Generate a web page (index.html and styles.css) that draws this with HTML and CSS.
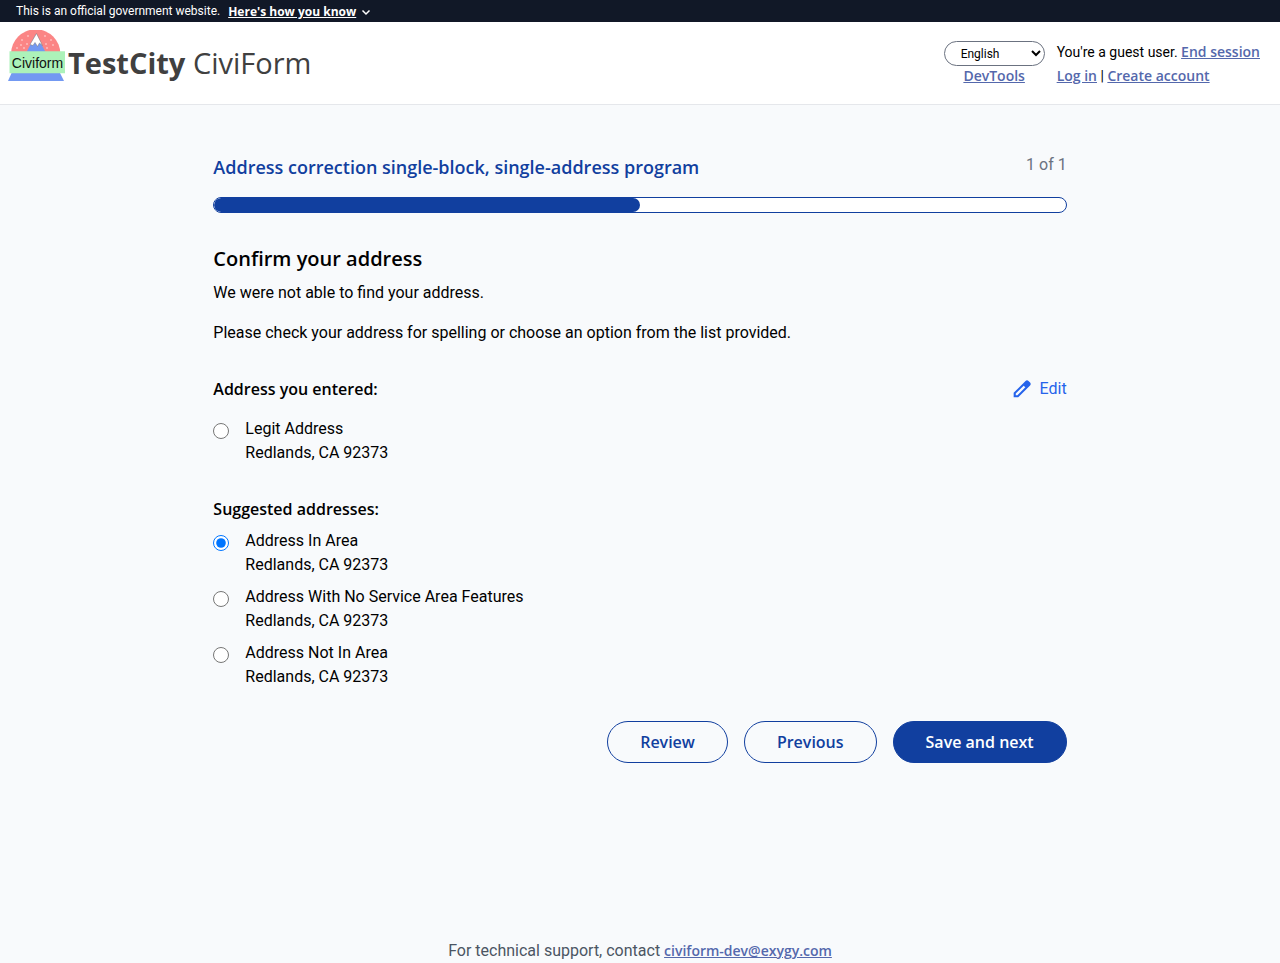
FILE: index.html
```html
<!DOCTYPE html>
<html lang="en">
<head>
<meta charset="utf-8">
<meta name="viewport" content="width=device-width, initial-scale=1">
<title>Confirm your address</title>
<link rel="stylesheet" href="styles.css">
</head>
<body>
<div class="banner">
  <span>This is an official government website.</span>
  <button class="banner-toggle" type="button"><span class="banner-label">Here's how you know</span>
    <svg class="chevron" viewBox="0 0 12 12" aria-hidden="true"><path d="M2.500 4.500 6 8l3.500-3.500" fill="none" stroke="currentColor" stroke-width="1.500"/></svg>
  </button>
</div>
<header class="header">
  <a class="brand" href="#">
    <svg class="logo" viewBox="0 0 60 52" role="img" aria-label="Civiform logo">
      <path d="M3 24a24.700 24.700 0 0 1 49.400 0z" fill="#fb8585"/>
      <path d="M28 4 38.500 24h-21z" fill="#7399f2"/>
      <path d="m28.500 3.500 6 12-3-2.500-2 3.500-2.500-4-2 3-3-1z" fill="#fff" stroke="#777" stroke-width=".5"/>
      <g fill="#ffe3e3"><circle cx="14" cy="10" r=".8"/><circle cx="20" cy="6" r=".8"/><circle cx="13" cy="15" r=".8"/><circle cx="19" cy="14" r=".8"/><circle cx="9" cy="18" r=".8"/><circle cx="16" cy="18" r=".8"/><circle cx="37" cy="6" r=".8"/><circle cx="43" cy="10" r=".8"/><circle cx="38" cy="14" r=".8"/><circle cx="45" cy="15" r=".8"/><circle cx="39" cy="18" r=".8"/></g>
      <path d="M4 42h47.500l4.500 9H0z" fill="#7399f2"/>
      <path d="M1.500 21.300H57v22H1.500z" fill="#acf2b9"/>
      <text class="logo-text" x="29.500" y="38" text-anchor="middle">Civiform</text>
    </svg>
    <span class="brand-name"><b>TestCity</b> CiviForm</span>
  </a>
  <div class="tools">
    <div class="tools-left">
      <select class="language" aria-label="Language"><option>English</option></select>
      <a class="link" href="#">DevTools</a>
    </div>
    <div class="session">
      <div>You're a guest user. <a class="link" href="#">End session</a></div>
      <div><a class="link" href="#">Log in</a> | <a class="link" href="#">Create account</a></div>
    </div>
  </div>
</header>
<main class="main">
  <div class="progress-head">
    <h1 class="program">Address correction single-block, single-address program</h1>
    <span class="count">1 of 1</span>
  </div>
  <div class="progress"><div class="progress-fill"></div></div>
  <form class="form">
    <h2 class="title">Confirm your address</h2>
    <p class="text">We were not able to find your address.</p>
    <p class="text">Please check your address for spelling or choose an option from the list provided.</p>
    <div class="entered-head">
      <h3 class="subtitle">Address you entered:</h3>
      <a class="edit" href="#"><svg class="pencil" viewBox="0 0 24 24" fill="currentColor" aria-hidden="true"><path fill-rule="evenodd" d="M2 16.500V22h5.500L21.700 7.800a2.800 2.800 0 0 0 0-3.600l-1.900-1.900a2.800 2.800 0 0 0-3.600 0zM4.500 19.500v-2L14 8l2 2-9.500 9.500z"/></svg>Edit</a>
    </div>
    <label class="option"><input class="radio" type="radio" name="address"><span>Legit Address<br>Redlands, CA 92373</span></label>
    <h3 class="subtitle suggested">Suggested addresses:</h3>
    <div class="options">
      <label class="option"><input class="radio" type="radio" name="address" checked><span>Address In Area<br>Redlands, CA 92373</span></label>
      <label class="option"><input class="radio" type="radio" name="address"><span>Address With No Service Area Features<br>Redlands, CA 92373</span></label>
      <label class="option"><input class="radio" type="radio" name="address"><span>Address Not In Area<br>Redlands, CA 92373</span></label>
    </div>
    <div class="actions">
      <button class="button" type="button">Review</button>
      <button class="button" type="button">Previous</button>
      <button class="button primary" type="submit">Save and next</button>
    </div>
  </form>
</main>
<footer class="footer">For technical support, contact <a class="link" href="#">civiform-dev@exygy.com</a></footer>
</body>
</html>
```
FILE: styles.css
```css
* { box-sizing: border-box; }
body {
  margin: 0;
  min-height: 100vh;
  display: flex;
  flex-direction: column;
  background: #f8fafc;
  color: #000;
  font: 16px/24px Roboto, sans-serif;
}
h1, h2, h3, p { margin: 0; }
button, select { font: inherit; }
.banner {
  display: flex;
  align-items: center;
  gap: 8px;
  padding: 1px 16px 0;
  background: #111827;
  color: #fff;
  font: 12px/21px Roboto, sans-serif;
}
.banner-toggle {
  display: flex;
  align-items: center;
  gap: 4px;
  padding: 0;
  border: 0;
  background: none;
  color: inherit;
}
.banner-label { font-family: "Open Sans", sans-serif; font-weight: 700; text-decoration: underline; }
.chevron { width: 12px; height: 12px; }
.header {
  display: flex;
  justify-content: space-between;
  align-items: flex-start;
  padding: 8px 20px 16px 8px;
  border-bottom: 1px solid #e5e7eb;
  background: #fff;
}
.brand {
  display: flex;
  align-items: flex-start;
  color: #404040;
  text-decoration: none;
}
.logo { width: 60px; height: 52px; }
.logo-text { font: 14px "Liberation Sans", sans-serif; fill: #111; }
.brand-name { padding-top: 15px; font: 29px/36px "Open Sans", sans-serif; }
.brand-name b { font-weight: 700; }
.tools { display: flex; gap: 12px; padding-top: 10px; font-size: 14px; }
.tools-left { display: flex; flex-direction: column; align-items: center; padding-top: 1px; line-height: 20px; }
.language {
  width: 101px;
  height: 25px;
  padding: 0 0 0 12px;
  border: 1px solid #6b7280;
  border-radius: 13px;
  background: #fff;
  color: #000;
  font-size: 12px;
}
.link {
  color: #5468ac;
  font-family: "Open Sans", sans-serif;
  font-size: 14px;
  font-weight: 600;
  text-decoration: underline;
}
.main { width: 66.6667%; margin: 0 auto; padding-top: 48px; }
.program, .title, .subtitle, .button { font-family: "Open Sans", sans-serif; font-weight: 600; }
.progress-head { display: flex; justify-content: space-between; }
.program { color: #113f9f; font-size: 18px; line-height: 28px; }
.count { color: #6b7280; }
.progress {
  height: 16px;
  margin-top: 16px;
  border: 1px solid #113f9f;
  border-radius: 8px;
  background: #fff;
  overflow: hidden;
}
.progress-fill { width: 50%; height: 100%; border-radius: 8px; background: #113f9f; }
.form { padding-top: 32px; }
.title { margin-bottom: 8px; font-size: 20px; line-height: 28px; }
.text { margin-bottom: 16px; }
.entered-head { display: flex; justify-content: space-between; margin: 32px 0 16px; }
.subtitle { font-size: 16px; line-height: 24px; }
.suggested { margin: 32px 0 8px; }
.edit { display: flex; align-items: center; gap: 8px; color: #2563eb; text-decoration: none; }
.pencil { width: 20px; height: 20px; }
.option { display: flex; align-items: flex-start; gap: 16px; }
.options { display: grid; gap: 8px; }
.radio { flex: none; width: 16px; height: 16px; margin: 6px 0 0; }
.actions { display: flex; justify-content: flex-end; gap: 16px; margin-top: 32px; }
.button {
  padding: 8px 32px;
  border: 1px solid #113f9f;
  border-radius: 21px;
  background: transparent;
  color: #113f9f;
}
.primary { background: #113f9f; color: #fff; }
.footer { margin-top: auto; color: #4b5563; text-align: center; }
```
